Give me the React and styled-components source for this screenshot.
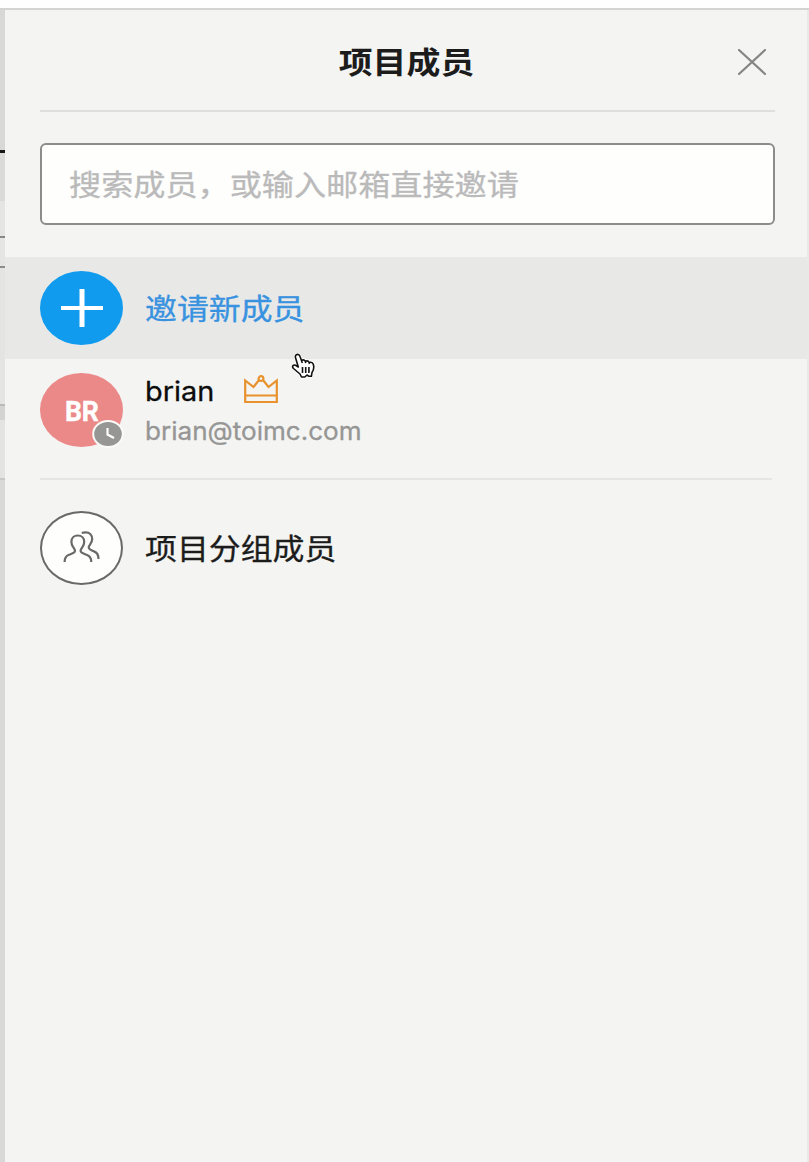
import React from "react";
import styled, { createGlobalStyle } from "styled-components";

const Global = createGlobalStyle`
  * { box-sizing: border-box; }
  body { margin: 0; background: #f4f4f3; font-family: Inter, "Noto Sans CJK SC", sans-serif; }
`;

const Page = styled.div`
  width: 809px;
  height: 1162px;
  display: flex;
  flex-direction: column;
  overflow: hidden;
`;

const TopEdge = styled.div`
  height: 10px;
  flex: none;
  background: #fefefe;
  border-bottom: 2px solid #d3d3d2;
`;

const Body = styled.div`
  flex: 1;
  display: flex;
`;

const Backdrop = styled.div`
  width: 5px;
  flex: none;
  display: flex;
  flex-direction: column;
`;

const Band = styled.div`
  height: ${(p) => p.$h}px;
  background: ${(p) => p.$color};
  flex: ${(p) => (p.$grow ? "1" : "none")};
`;

const Panel = styled.section`
  flex: 1;
  position: relative;
  background: #f4f4f3;
  border-right: 2px solid #e9e9e8;
`;

const Header = styled.header`
  height: 102px;
  margin: 0 32px 0 35px;
  display: grid;
  grid-template-columns: 44px 1fr 44px;
  align-items: center;
  border-bottom: 2px solid #dededd;
`;

const Title = styled.h1`
  margin: 0;
  grid-column: 2;
  justify-self: center;
  font-size: 30px;
  line-height: 44px;
  font-weight: 700;
  color: #1c1c1c;
  transform: translate(-1.5px, 2px) scaleX(1.13);
`;

const CloseButton = styled.button`
  border: 0;
  background: none;
  display: flex;
  justify-content: flex-end;
  padding: 3px 9px 0 0;
`;

const SearchBox = styled.div`
  height: 82px;
  margin: 31px 32px 32px 35px;
  padding-left: 27px;
  display: flex;
  align-items: center;
  background: #fefefd;
  border: 2px solid #8c8c8b;
  border-radius: 6px;
`;

const Label = styled.span`
  font-size: ${(p) => p.$size}px;
  line-height: ${(p) => p.$line || 44}px;
  color: ${(p) => p.$color};
  white-space: nowrap;
  -webkit-text-stroke: 0.3px currentColor;
  transform: translateY(${(p) => p.$drop || 0}px) scaleX(${(p) => p.$stretch});
  transform-origin: left center;
`;

const Row = styled.div`
  height: ${(p) => p.$h}px;
  padding-left: 35px;
  display: flex;
  align-items: center;
  gap: 22px;
  background: ${(p) => (p.$active ? "#e8e8e7" : "transparent")};
`;

const Avatar = styled.div`
  position: relative;
  width: 83px;
  height: 74px;
  flex: none;
  display: flex;
  align-items: center;
  justify-content: center;
  border-radius: 50%;
  background: ${(p) => p.$bg};
  border: ${(p) => (p.$outlined ? "2.5px solid #696968" : "0")};
`;

const Initials = styled.span`
  color: #fff;
  font: 700 28px/30px Roboto, sans-serif;
  -webkit-text-stroke: 0.4px #fff;
  transform: translateY(2px) scaleX(0.95);
`;

const Badge = styled.svg`
  position: absolute;
  left: 52px;
  top: 47px;
`;

const Info = styled.div`
  display: flex;
  flex-direction: column;
`;

const NameLine = styled.div`
  display: flex;
  align-items: center;
  gap: 34px;
  height: 40px;
`;

const Divider = styled.hr`
  height: 2px;
  margin: 17px 35px;
  border: 0;
  background: #e5e5e4;
`;

const Cursor = styled.svg`
  position: absolute;
  left: 285px;
  top: 343px;
`;

const backdropBands = [
  [140, "#d8d8d7"], [3, "#171717"], [48, "#dadad9"], [35, "#e5e5e4"],
  [2, "#888887"], [28, "#e5e5e4"], [2, "#8c8c8b"], [136, "#e4e4e3"],
  [2, "#bbbbba"], [14, "#d3d3d2"], [58, "#e3e3e2"], [2, "#c8c8c7"],
];

export default function App() {
  return (
    <Page>
      <Global />
      <TopEdge />
      <Body>
        <Backdrop>
          {backdropBands.map(([h, color], i) => <Band key={i} $h={h} $color={color} />)}
          <Band $grow $color="#d8d8d7" />
        </Backdrop>
        <Panel>
          <Header>
            <Title>项目成员</Title>
            <CloseButton aria-label="关闭">
              <svg width="28" height="26" viewBox="0 0 28 26" fill="none" stroke="#858584" strokeWidth="2.2" strokeLinecap="round">
                <path d="M1 1L27 25M27 1L1 25" />
              </svg>
            </CloseButton>
          </Header>
          <SearchBox>
            <Label $size={29} $stretch={1.108} $drop={2} $color="#bababa">搜索成员，或输入邮箱直接邀请</Label>
          </SearchBox>
          <Row $h={102} $active>
            <Avatar $bg="#109bef">
              <svg width="42" height="38" viewBox="0 0 42 38" stroke="#fff" strokeWidth="5">
                <path d="M0 19H42" strokeWidth="4" />
                <path d="M21 0V38" />
              </svg>
            </Avatar>
            <Label $size={29} $stretch={1.1} $drop={2} $color="#3892df">邀请新成员</Label>
          </Row>
          <Row $h={102}>
            <Avatar $bg="#eb8988">
              <Initials>BR</Initials>
              <Badge width="32" height="28" viewBox="0 0 32 28" fill="none">
                <ellipse cx="16" cy="14" rx="14.8" ry="13" fill="#969695" stroke="#fafaf9" strokeWidth="2" />
                <path d="M15.5 8V14.5L22 18" stroke="#fff" strokeWidth="2.2" />
              </Badge>
            </Avatar>
            <Info>
              <NameLine>
                <Label $size={27} $line={40} $stretch={1.07} $drop={0.5} $color="#0c0c0c">brian</Label>
                <svg width="34" height="32" viewBox="0 0 34 32" fill="none" stroke="#e7922d" strokeWidth="2.2">
                  <path d="M15 5L9.5 12L1.2 5.5V27H32.8V5.5L24.5 12L19 5M1 20.5H33" />
                  <circle cx="17" cy="3.6" r="2.4" />
                </svg>
              </NameLine>
              <Label $size={25} $line={38} $stretch={1.043} $drop={0.5} $color="#969695">brian@toimc.com</Label>
            </Info>
          </Row>
          <Divider />
          <Row $h={102}>
            <Avatar $bg="#fefefd" $outlined>
              <svg width="38" height="34" viewBox="0 0 38 34" fill="none" stroke="#696968" strokeWidth="2.2">
                <path d="M1.6 31C1.6 27 2.5 25 6 23.8C9.5 22.7 12 22 12 19.8C12 18.4 11 17.5 10 15.8C9 14.2 8.4 12.5 8.4 10.8C8.4 7 11 4.5 14.8 4.5S21.2 7 21.2 10.8C21.2 12.5 20.6 14.2 19.6 15.8C18.6 17.5 17.6 18.4 17.6 19.8C17.6 22 20.1 22.7 23.6 23.8C27.1 25 28.3 27 28.3 31" />
                <path d="M18.8 1.9C20 1.4 21.5 1.3 22.8 1.3C26.6 1.3 29.2 4.2 29.2 8C29.2 12.3 25.7 13.8 25.7 16.6C25.7 18.5 27.8 19.3 31 20.4C34.2 21.5 35.5 23.8 35.5 28" />
              </svg>
            </Avatar>
            <Label $size={29} $stretch={1.1} $drop={2} $color="#1c1c1c">项目分组成员</Label>
          </Row>
          <Cursor width="27" height="26" viewBox="0 0 27 26">
            <path d="M6 2C8 .5 9.6 2 10.2 4L11.5 7.5C13 6.5 14.5 7 15.3 8.2C17 7.5 18.5 8 19.2 9.5C21.5 8.7 23 9.8 23.5 12C24.2 15 23.8 17 22 19.5L21.4 23.3H19L17 22L14.8 24H11.5L10 21L3.5 15.5C1.5 13.5 3.2 11.3 5.5 12.3L8.3 14L5.6 5C5.2 3.7 5.2 2.7 6 2Z" fill="#fff" stroke="#fff" strokeWidth="3" />
            <path d="M6 2C8 .5 9.6 2 10.2 4L11.5 7.5C13 6.5 14.5 7 15.3 8.2C17 7.5 18.5 8 19.2 9.5C21.5 8.7 23 9.8 23.5 12C24.2 15 23.8 17 22 19.5L21.4 23.3H19L17 22L14.8 24H11.5L10 21L3.5 15.5C1.5 13.5 3.2 11.3 5.5 12.3L8.3 14L5.6 5C5.2 3.7 5.2 2.7 6 2ZM11.5 7.5L12.3 10M15.3 8.2L15.8 10M19.2 9.5L19.5 11M12.5 14V20M15.7 14V20M18.9 14V20" fill="#fff" stroke="#111" strokeWidth="1.6" strokeLinejoin="round" />
          </Cursor>
        </Panel>
      </Body>
    </Page>
  );
}
